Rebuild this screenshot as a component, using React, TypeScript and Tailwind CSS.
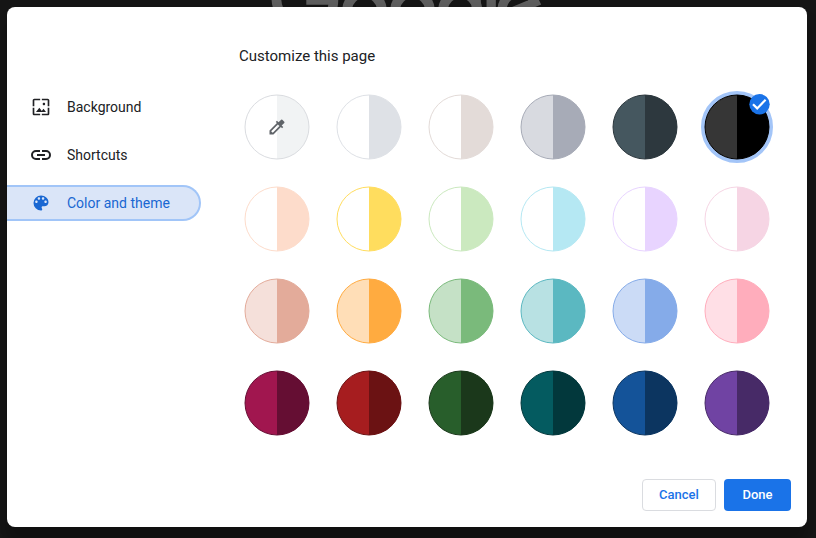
import { MdOutlineWallpaper } from "react-icons/md";

const themes = [
  ["#ffffff", "#f1f3f4", "#dadce0"], ["#ffffff", "#dee1e6", "#dee1e6"], ["#ffffff", "#e3dbd8", "#e3dbd8"],
  ["#d8dae0", "#a7abb7", "#a7abb7"], ["#45575f", "#2d383e", "#2d383e"], ["#363636", "#000000", "#000000"],
  ["#ffffff", "#fddccb", "#fddccb"], ["#ffffff", "#ffdd5e", "#ffdd5e"], ["#ffffff", "#cbe9bf", "#cbe9bf"],
  ["#ffffff", "#b5e8f3", "#b5e8f3"], ["#ffffff", "#e8d4ff", "#e8d4ff"], ["#ffffff", "#f6d5e4", "#f6d5e4"],
  ["#f5e0da", "#e3ab9a", "#e3ab9a"], ["#ffdeb7", "#ffab40", "#ffab40"], ["#c5e1c6", "#7aba7b", "#7aba7b"],
  ["#b8e1e3", "#5bb8c1", "#5bb8c1"], ["#cbdbf6", "#85abe9", "#85abe9"], ["#ffdfe6", "#ffadbc", "#ffadbc"],
  ["#a1164f", "#650e33", "#650e33"], ["#a61d1f", "#6b1213", "#6b1213"], ["#285e2b", "#1b381b", "#1b381b"],
  ["#045b60", "#02383c", "#02383c"], ["#145399", "#0c3560", "#0c3560"], ["#7043a3", "#472a67", "#472a67"],
];

function Swatch({ colors, index }: { colors: string[]; index: number }) {
  const [left, right, edge] = colors;
  const selected = index === 5;
  return (
    <button className="relative size-[72px]" aria-label="Theme color">
      <svg width="72" height="72" viewBox="0 0 72 72">
        {selected && <circle cx="36" cy="36" r="34" fill="none" stroke="#a3c5f8" strokeWidth="4" />}
        <circle cx="36" cy="36" r="32" fill={left} />
        <path d="M36 4a32 32 0 0 1 0 64z" fill={right} />
        <circle cx="36" cy="36" r="32" fill="none" stroke={edge} />
      </svg>
      {index === 0 && (
        <svg className="absolute top-[26px] left-[26px]" width="20" height="20" viewBox="0 0 24 24" fill="#5f6368">
          <path d="M20.71 5.63l-2.34-2.34a1 1 0 0 0-1.41 0l-3.12 3.12-1.93-1.91-1.41 1.41 1.42 1.42L3 16.25V21h4.75l8.92-8.92 1.42 1.42 1.41-1.41-1.92-1.92 3.12-3.12a1 1 0 0 0 .01-1.42zM6.92 19L5 17.08l8.06-8.06 1.92 1.92L6.92 19z" />
        </svg>
      )}
      {selected && (
        <svg className="absolute top-[3px] left-[48px]" width="21" height="21" viewBox="0 0 21 21">
          <circle cx="10.5" cy="10.3" r="10.2" fill="#1a73e8" />
          <path d="M4 10.2l4.200 4.200 8.400-8.600" fill="none" stroke="#fff" strokeWidth="2.200" />
        </svg>
      )}
    </button>
  );
}

function Logo() {
  return (
    <svg className="absolute top-0 left-[271px]" width="272" height="8" viewBox="0 36.700 272 8" fill="none" stroke="#616161" strokeWidth="9.700" aria-label="Google">
      <circle cx="35.300" cy="34.900" r="29.900" strokeDasharray="65 123" strokeDashoffset="-61" />
      <path d="M35.300 36.700h27.200q0 5-1.300 9" strokeWidth="9.500" />
      <circle cx="93.500" cy="47.200" r="17.400" />
      <circle cx="141.500" cy="47.200" r="17.400" />
      <circle cx="189.200" cy="47.200" r="17.200" />
      <path d="M205.200 26v40M220.200 3v65" strokeWidth="9.300" />
      <path d="M240 62a17.400 17.400 0 1 1 24-23l-27 11.200" strokeWidth="9" />
    </svg>
  );
}

export default function App() {
  return (
    <main className="relative h-[538px] w-[816px] overflow-hidden bg-[#161616] p-[7px] font-[Roboto,sans-serif] text-[#202124]">
      <Logo />
      <section className="relative flex h-[520px] w-[800px] flex-col rounded-lg bg-white shadow-[0_0_16px_rgba(0,0,0,0.12),0_16px_16px_rgba(0,0,0,0.24)]">
        <div className="flex h-[456px]">
          <nav className="flex w-[194px] flex-col gap-3 pt-[82px] text-sm">
            <div className="flex h-9 items-center gap-4 pl-6">
              <MdOutlineWallpaper size={20} />
              <span>Background</span>
            </div>
            <div className="flex h-9 items-center gap-4 pl-6">
              <svg width="20" height="20" viewBox="0 0 20 20" fill="none" stroke="currentColor" strokeWidth="2">
                <path d="M9 6H5a4 4 0 0 0 0 8h4M11 6h4a4 4 0 0 1 0 8h-4M6 10h8" />
              </svg>
              <span>Shortcuts</span>
            </div>
            <div className="flex h-9 items-center gap-4 rounded-r-full border-2 border-l-0 border-[#a1c5f8] bg-[#dae5f8] pl-6 text-[#1967d2]">
              <svg width="20" height="20" viewBox="0 0 24 24" fill="currentColor">
                <path d="M12 3a9 9 0 0 0 0 18c.83 0 1.5-.67 1.5-1.5 0-.39-.15-.74-.39-1.01-.23-.26-.38-.61-.38-.99 0-.83.67-1.5 1.5-1.5H16c2.76 0 5-2.24 5-5 0-4.42-4.03-8-9-8zm-5.500 9c-.83 0-1.500-.67-1.500-1.500S5.670 9 6.500 9 8 9.670 8 10.500 7.330 12 6.500 12zm3-4C8.670 8 8 7.330 8 6.500S8.670 5 9.500 5s1.500.67 1.500 1.500S10.330 8 9.500 8zm5 0c-.83 0-1.500-.67-1.500-1.500S13.670 5 14.500 5s1.500.67 1.500 1.500S15.330 8 14.500 8zm3 4c-.83 0-1.500-.67-1.500-1.500S16.670 9 17.500 9s1.500.67 1.500 1.500-.67 1.500-1.500 1.500z" />
              </svg>
              <span>Color and theme</span>
            </div>
          </nav>
          <div className="flex flex-col pt-[38px]">
            <h1 className="pl-[38px] text-[15px] leading-[22px]">Customize this page</h1>
            <div className="mt-6 ml-10 grid grid-cols-6 gap-5">
              {themes.map((colors, i) => <Swatch key={i} colors={colors} index={i} />)}
            </div>
          </div>
        </div>
        <footer className="mt-4 flex justify-end gap-2 pr-4 text-[13px] font-medium">
          <button className="h-8 w-[74px] rounded border border-[#dadce0] text-[#1a73e8]">Cancel</button>
          <button className="h-8 w-[67px] rounded bg-[#1a73e8] text-white">Done</button>
        </footer>
      </section>
    </main>
  );
}
